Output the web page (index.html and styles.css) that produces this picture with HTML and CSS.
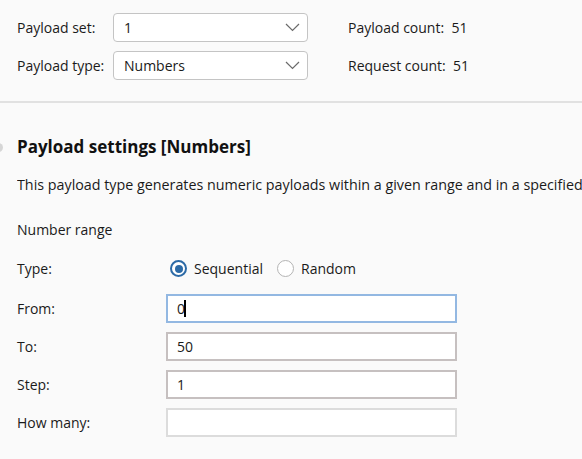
FILE: index.html
```html
<!DOCTYPE html>
<html>
<head>
<meta charset="utf-8">
<link rel="stylesheet" href="styles.css">
</head>
<body>
<div class="top">
  <div class="row">
    <span class="lbl">Payload set:</span>
    <div class="select"><span>1</span><svg class="chev" width="15" height="9" viewBox="0 0 15 9"><path d="M1 1 L7.5 7.5 L14 1" fill="none" stroke="#6b6b6b" stroke-width="1.2"/></svg></div>
    <span class="count">Payload count:&nbsp; 51</span>
  </div>
  <div class="row">
    <span class="lbl">Payload type:</span>
    <div class="select"><span>Numbers</span><svg class="chev" width="15" height="9" viewBox="0 0 15 9"><path d="M1 1 L7.5 7.5 L14 1" fill="none" stroke="#6b6b6b" stroke-width="1.2"/></svg></div>
    <span class="count">Request count:&nbsp; 51</span>
  </div>
</div>
<div class="section">
  <h2 class="title">Payload settings [Numbers]</h2>
  <p class="desc">This payload type generates numeric payloads within a given range and in a specified format.</p>
  <div class="sub">Number range</div>
  <div class="frow radios">
    <span class="flbl">Type:</span>
    <label class="radio"><span class="dot on"></span>Sequential</label>
    <label class="radio"><span class="dot"></span>Random</label>
  </div>
  <div class="frow first">
    <span class="flbl">From:</span>
    <div class="input focus"><span>0</span><span class="caret"></span></div>
  </div>
  <div class="frow">
    <span class="flbl">To:</span>
    <div class="input"><span>50</span></div>
  </div>
  <div class="frow">
    <span class="flbl">Step:</span>
    <div class="input"><span>1</span></div>
  </div>
  <div class="frow">
    <span class="flbl">How many:</span>
    <div class="input disabled"></div>
  </div>
</div>
</body>
</html>
```
FILE: styles.css
```css
html, body {
  margin: 0;
  padding: 0;
  background: #fafafa;
  font-family: "Open Sans", "Noto Sans", sans-serif;
  font-size: 14px;
  color: #1a1a1a;
  overflow: hidden;
}
.top {
  padding: 13px 0 21px 17px;
  display: flex;
  flex-direction: column;
  gap: 9px;
  border-bottom: 2px solid #e1e1e1;
}
.row {
  display: flex;
  align-items: center;
  height: 29px;
}
.lbl {
  width: 96px;
}
.select {
  width: 195px;
  height: 29px;
  box-sizing: border-box;
  border: 1px solid #c4c4c4;
  border-radius: 4px;
  background: #fff;
  display: flex;
  align-items: center;
  justify-content: space-between;
  padding: 0 7px 0 10px;
}
.count {
  margin-left: 40px;
}
.section {
  position: relative;
  padding: 33px 0 0 17px;
  overflow: hidden;
}
.section::before {
  content: "";
  position: absolute;
  left: -6px;
  top: 40px;
  width: 9px;
  height: 9px;
  border-radius: 50%;
  background: #d6d6d6;
}
.title {
  margin: 0;
  font-size: 17px;
  font-weight: 700;
  height: 22px;
  line-height: 22px;
  color: #111;
}
.desc {
  margin: 17px 0 0;
  white-space: nowrap;
  overflow: hidden;
  line-height: 20px;
  font-size: 14.3px;
}
.sub {
  margin-top: 25px;
  line-height: 20px;
}
.frow {
  display: flex;
  align-items: center;
  height: 29px;
  margin-top: 9px;
}
.radios {
  margin-top: 14px;
}
.frow.first {
  margin-top: 11px;
}
.flbl {
  width: 149px;
}
.radio {
  display: flex;
  align-items: center;
  gap: 7px;
  margin-left: 4px;
  margin-right: 10px;
}
.dot {
  width: 17px;
  height: 17px;
  box-sizing: border-box;
  border-radius: 50%;
  border: 1px solid #b4b4b4;
  background: #fff;
  display: inline-block;
  position: relative;
}
.dot.on {
  border: 2px solid #2c6aa6;
}
.dot.on::after {
  content: "";
  position: absolute;
  left: 2.5px;
  top: 2.5px;
  width: 8px;
  height: 8px;
  border-radius: 50%;
  background: #2c6aa6;
}
.input {
  width: 291px;
  height: 29px;
  box-sizing: border-box;
  border: 2px solid #c6c0c0;
  background: #fff;
  display: flex;
  align-items: center;
  padding-left: 9px;
}
.input.focus {
  border-color: #93b8e2;
}
.input.disabled {
  border-color: #dcdcdc;
}
.caret {
  display: inline-block;
  width: 1.5px;
  height: 17px;
  background: #000;
  margin-left: -1px;
}
```
